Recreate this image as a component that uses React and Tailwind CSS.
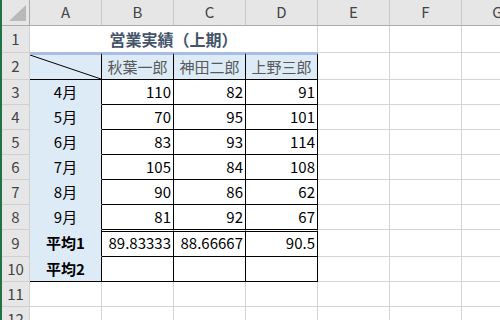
import React from "react";

const FONT = { fontFamily: '"Noto Sans CJK JP", "Noto Sans", sans-serif' };

function RowHead({ n, h }) {
  return (
    <div className={`w-[28px] shrink-0 ${h} border-r border-b border-[#d0d0d0] bg-[#e6e6e6] flex items-center justify-center text-[15px] text-[#444]`}>
      {n}
    </div>
  );
}

function Blank({ h, cls = "" }) {
  return <div className={`w-[72px] shrink-0 ${h} border-r border-b border-[#d4d4d4] ${cls}`} />;
}

function Num({ v, h, extra = "" }) {
  return (
    <div className={`w-[72px] shrink-0 ${h} border-r border-b border-black flex items-center justify-end pr-[2px] text-[15px] text-black ${extra}`}>
      {v}
    </div>
  );
}

const data = [
  ["4月", 110, 82, 91],
  ["5月", 70, 95, 101],
  ["6月", 83, 93, 114],
  ["7月", 105, 84, 108],
  ["8月", 90, 86, 62],
  ["9月", 81, 92, 67],
];

export default function App() {
  return (
    <div className="flex w-[500px] h-[320px] overflow-hidden bg-white" style={FONT}>
      <div className="w-[2px] shrink-0 bg-[#217346]" />
      <div className="flex flex-col">
        {/* column headers */}
        <div className="flex h-[26px]">
          <div className="w-[28px] shrink-0 h-[26px] border-r border-b border-[#ababab] bg-[#e6e6e6] relative">
            <svg className="absolute left-0 top-0" width="28" height="25" viewBox="0 0 28 25">
              <polygon points="7,21 24,21 24,5" fill="#b9b9b9" />
            </svg>
          </div>
          {["A", "B", "C", "D", "E", "F", "G"].map((c) => (
            <div key={c} className="w-[72px] shrink-0 h-[26px] border-r border-b border-r-[#c8c8c8] border-b-[#ababab] bg-[#e6e6e6] flex items-center justify-center text-[15px] text-[#444]">
              {c}
            </div>
          ))}
        </div>

        {/* row 1 */}
        <div className="flex h-[27px]">
          <RowHead n="1" h="h-[27px]" />
          <div className="w-[288px] shrink-0 h-[27px] border-r border-b border-r-[#d4d4d4] border-b-[#a9bde4] flex items-center justify-center text-[16px] font-bold text-[#44546a]">
            営業実績（上期）
          </div>
          <Blank h="h-[27px]" />
          <Blank h="h-[27px]" />
          <Blank h="h-[27px]" />
        </div>

        {/* row 2 */}
        <div className="flex h-[27px]">
          <RowHead n="2" h="h-[27px]" />
          <div className="w-[72px] shrink-0 h-[27px] border-t-2 border-r border-b border-t-[#a9bde4] border-r-black border-b-black bg-[#ddebf7] relative">
            <svg className="absolute inset-0 w-full h-full" preserveAspectRatio="none" viewBox="0 0 100 100">
              <line x1="0" y1="0" x2="100" y2="100" stroke="#000" strokeWidth="1" vectorEffect="non-scaling-stroke" />
            </svg>
          </div>
          {["秋葉一郎", "神田二郎", "上野三郎"].map((n) => (
            <div key={n} className="w-[72px] shrink-0 h-[27px] border-t-2 border-r border-b border-t-[#a9bde4] border-r-black border-b-black bg-[#ddebf7] flex items-center justify-center text-[15px] text-[#595959]">
              {n}
            </div>
          ))}
          <Blank h="h-[27px]" />
          <Blank h="h-[27px]" />
          <Blank h="h-[27px]" />
        </div>

        {/* rows 3-8 */}
        {data.map((r, i) => (
          <div key={r[0]} className="flex h-[25px]">
            <RowHead n={String(i + 3)} h="h-[25px]" />
            <div className="w-[72px] shrink-0 h-[25px] border-r border-b border-r-black border-b-[#ddebf7] bg-[#ddebf7] flex items-center justify-center text-[15px] text-black">
              {r[0]}
            </div>
            <Num v={r[1]} h="h-[25px]" />
            <Num v={r[2]} h="h-[25px]" />
            <Num v={r[3]} h="h-[25px]" />
            <Blank h="h-[25px]" />
            <Blank h="h-[25px]" />
            <Blank h="h-[25px]" />
          </div>
        ))}

        {/* row 9 */}
        <div className="flex h-[27px]">
          <RowHead n="9" h="h-[27px]" />
          <div className="w-[72px] shrink-0 h-[27px] border-r border-b border-r-black border-b-[#ddebf7] bg-[#ddebf7] flex items-center justify-center text-[15px] font-bold text-black">
            平均1
          </div>
          {["89.83333", "88.66667", "90.5"].map((v) => (
            <Num key={v} v={v} h="h-[27px]" extra="border-t border-t-white shadow-[inset_0_1px_0_#000]" />
          ))}
          <Blank h="h-[27px]" />
          <Blank h="h-[27px]" />
          <Blank h="h-[27px]" />
        </div>

        {/* row 10 */}
        <div className="flex h-[25px]">
          <RowHead n="10" h="h-[25px]" />
          <div className="w-[72px] shrink-0 h-[25px] border-r border-b border-black bg-[#ddebf7] flex items-center justify-center text-[15px] font-bold text-black">
            平均2
          </div>
          <Num v="" h="h-[25px]" />
          <Num v="" h="h-[25px]" />
          <Num v="" h="h-[25px]" />
          <Blank h="h-[25px]" />
          <Blank h="h-[25px]" />
          <Blank h="h-[25px]" />
        </div>

        {/* rows 11-12 */}
        {["11", "12"].map((n) => (
          <div key={n} className="flex h-[25px]">
            <RowHead n={n} h="h-[25px]" />
            {[0, 1, 2, 3, 4, 5, 6].map((k) => (
              <Blank key={k} h="h-[25px]" />
            ))}
          </div>
        ))}
      </div>
    </div>
  );
}
